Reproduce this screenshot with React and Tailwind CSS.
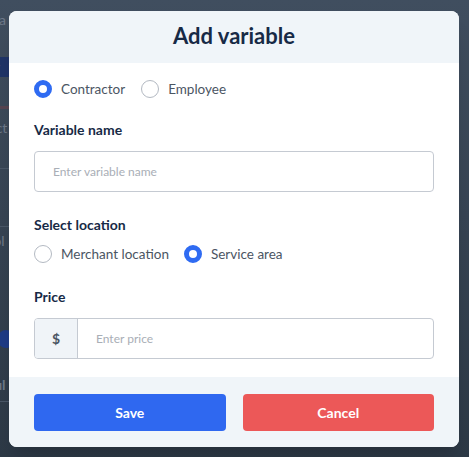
import { useState } from "react";

function Radio({ checked, label, onClick }) {
  return (
    <button type="button" onClick={onClick} className="flex items-center gap-[9px]">
      <span
        className={
          checked
            ? "h-[18px] w-[18px] rounded-full border-[5px] border-[#2f6bf2] bg-white"
            : "h-[18px] w-[18px] rounded-full border border-[#b3b9c2] bg-white"
        }
      />
      <span className="text-[13.5px] leading-5 text-[#4b5563]">{label}</span>
    </button>
  );
}

export default function App() {
  const [kind, setKind] = useState("contractor");
  const [loc, setLoc] = useState("service");

  return (
    <div
      className="relative h-[457px] w-full overflow-hidden bg-gradient-to-b from-[#404e5f] to-[#2d3946]"
      style={{ fontFamily: "Lato, 'Noto Sans', sans-serif" }}
    >
      {/* page behind the overlay */}
      <div className="flex w-[9px] flex-col overflow-hidden text-[14px] text-[#6d7888]">
        <div className="mt-[10px] -ml-[26px] whitespace-nowrap leading-5">Extra</div>
        <div className="mt-[27px] h-[20px] bg-[#1f3467] -ml-[20px] pl-[8px] text-[#5a688a] leading-5 whitespace-nowrap">
          ar
        </div>
        <div className="mt-[29px] h-[3px] bg-[#574551]" />
        <div className="mt-[9px] -ml-[30px] whitespace-nowrap leading-5">Select</div>
        <div className="mt-[30px] h-px bg-[#4a5767]" />
        <div className="mt-[57px] h-px bg-[#4a5767]" />
        <div className="mt-[4px] -ml-[26px] whitespace-nowrap leading-5">Empl</div>
        <div className="mt-[55px] -ml-[26px] whitespace-nowrap leading-5 font-bold">Allo</div>
        <div className="mt-[4px] ml-[-2px] h-[18px] w-[16px] rounded-full bg-[#1e3b85]" />
        <div className="mt-[27px] -ml-[28px] whitespace-nowrap leading-5 font-bold">Resul</div>
        <div className="mt-[6px] h-px bg-[#4a5767]" />
      </div>

      {/* modal */}
      <div className="absolute left-[9px] top-[11px] w-[450px] overflow-hidden rounded-lg bg-white shadow-xl">
        <div className="flex h-[52px] items-center justify-center bg-[#f0f5f9] pb-[3px]">
          <h2 className="text-[22px] font-bold text-[#172a46]">Add variable</h2>
        </div>

        <div className="px-[25px] pt-[16px] pb-[18px]">
          <div className="flex items-center gap-[16px]">
            <Radio checked={kind === "contractor"} label="Contractor" onClick={() => setKind("contractor")} />
            <Radio checked={kind === "employee"} label="Employee" onClick={() => setKind("employee")} />
          </div>

          <label className="mt-[21px] block text-[14px] font-bold leading-5 text-[#172a46]">
            Variable name
          </label>
          <input
            placeholder="Enter variable name"
            className="mt-[11px] h-[41px] w-full rounded border border-[#c5cad2] px-[18px] text-[12px] text-[#374151] outline-none placeholder:text-[#a9aeb6]"
          />

          <label className="mt-[23px] block text-[14px] font-bold leading-5 text-[#172a46]">
            Select location
          </label>
          <div className="mt-[9px] flex items-center gap-[15px]">
            <Radio checked={loc === "merchant"} label="Merchant location" onClick={() => setLoc("merchant")} />
            <Radio checked={loc === "service"} label="Service area" onClick={() => setLoc("service")} />
          </div>

          <label className="mt-[23px] block text-[14px] font-bold leading-5 text-[#172a46]">
            Price
          </label>
          <div className="mt-[11px] flex h-[41px] w-full overflow-hidden rounded border border-[#c5cad2]">
            <div className="flex w-[43px] items-center justify-center border-r border-[#c5cad2] bg-[#f0f4f8] text-[14px] font-bold text-[#4b5563]">
              $
            </div>
            <input
              placeholder="Enter price"
              className="flex-1 px-[18px] text-[12px] text-[#374151] outline-none placeholder:text-[#a9aeb6]"
            />
          </div>
        </div>

        <div className="flex gap-[17px] bg-[#f0f5f9] px-[25px] pt-[17px] pb-[16px]">
          <button className="h-[37px] flex-1 rounded bg-[#2f68f0] text-[14px] font-bold text-white">
            Save
          </button>
          <button className="h-[37px] flex-1 rounded bg-[#ec5858] text-[14px] font-bold text-white">
            Cancel
          </button>
        </div>
      </div>
    </div>
  );
}
